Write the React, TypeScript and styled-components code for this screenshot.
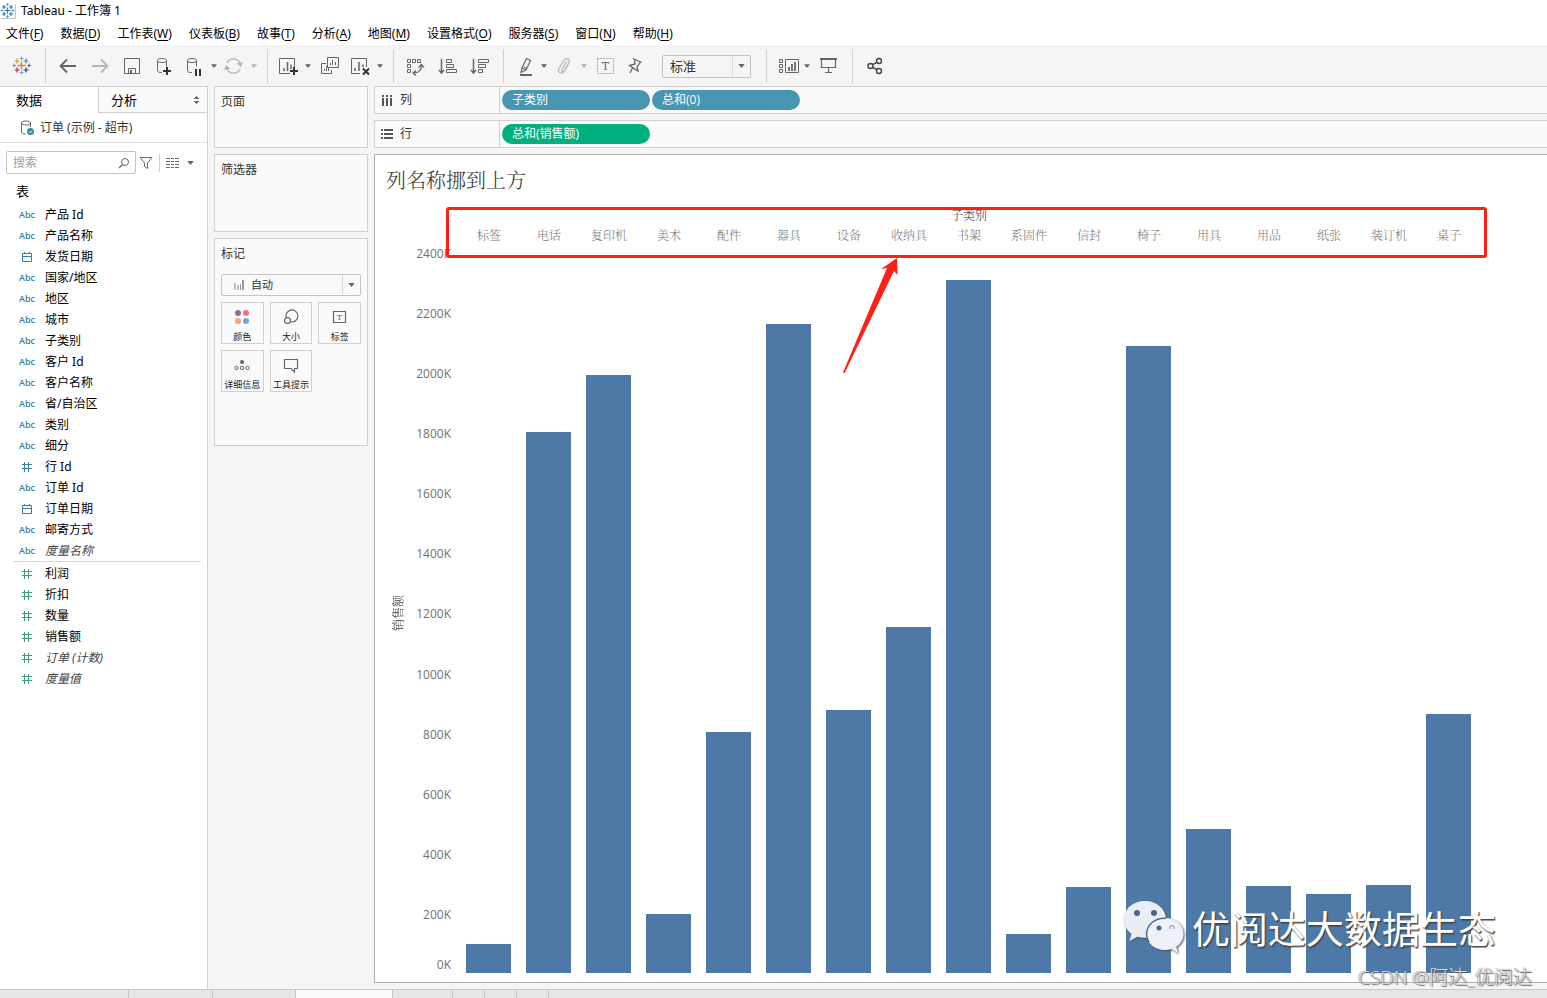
import React from 'react';
import styled, { createGlobalStyle } from 'styled-components';

const ui = `"Open Sans", "Noto Sans CJK SC", sans-serif`;
const chrome = `"Noto Sans", "Noto Sans CJK SC", sans-serif`;
const serif = `"Liberation Serif", "Noto Serif CJK SC", "Noto Sans CJK SC", serif`;

const GlobalStyle = createGlobalStyle`
  * { box-sizing: border-box; }
  body { margin: 0; font-family: ${ui}; font-size: 12px; line-height: 18px; color: #000; background: #f5f5f5; }
  button, input, select { font: inherit; color: inherit; margin: 0; }
  button { background: none; border: 0; padding: 0; }
  ul { list-style: none; margin: 0; padding: 0; }
  h1, h2 { margin: 0; font-weight: 400; }
  svg { display: block; flex: none; }
`;

const Page = styled.div`
  display: flex;
  flex-direction: column;
  height: 100vh;
  min-height: 760px;
  overflow: hidden;
`;

/* ---------- window chrome ---------- */

const TitleBar = styled.header`
  display: flex;
  align-items: center;
  gap: 5px;
  height: 22px;
  background: #fff;
  font-family: ${chrome};
`;

const MenuBar = styled.nav`
  display: flex;
  gap: 17px;
  height: 23px;
  padding: 0 6px;
  background: #fff;
  font-family: ${chrome};
`;

const MenuButton = styled.button`
  line-height: 24px;
  white-space: nowrap;
  u { text-underline-offset: 2px; }
`;

const Toolbar = styled.div`
  display: flex;
  flex: none;
  height: 41px;
  padding-top: 4px;
`;

const ToolGroup = styled.div<{ $first?: boolean; $last?: boolean }>`
  display: flex;
  align-items: center;
  height: 34px;
  padding: ${(p) => (p.$first ? '0 1px 0 0' : '0 7px 0 6px')};
  border-right: ${(p) => (p.$last ? '0' : '1px solid #d0d0d0')};
`;

const ToolButton = styled.button<{ $w?: number; $dim?: boolean }>`
  display: flex;
  align-items: center;
  justify-content: center;
  width: ${(p) => p.$w ?? 32}px;
  height: 34px;
  color: ${(p) => (p.$dim ? '#b5b5b5' : '#666')};
`;

const SelectBox = styled.div<{ $w?: number; $h: number }>`
  position: relative;
  display: flex;
  align-items: center;
  width: ${(p) => (p.$w ? `${p.$w}px` : '100%')};
  height: ${(p) => p.$h}px;
  border: 1px solid #c4c4c4;
  border-radius: 2px;
`;

const NativeSelect = styled.select<{ $pad: number; $size: number }>`
  appearance: none;
  width: 100%;
  height: 100%;
  border: 0;
  background: transparent;
  padding: 0 20px 0 ${(p) => p.$pad}px;
  font-size: ${(p) => p.$size}px;
  color: #333;
`;

const SelectArrow = styled.span`
  position: absolute;
  right: 0;
  top: 0;
  bottom: 0;
  width: 18px;
  display: flex;
  align-items: center;
  justify-content: center;
  border-left: 1px solid #d8d8d8;
  color: #666;
  pointer-events: none;
`;

const SelectIcon = styled.span`
  position: absolute;
  left: 11px;
`;

const ScaleSelect = styled.div`
  padding: 0 8px 0 12px;
`;

/* ---------- work area ---------- */

const Workspace = styled.div`
  display: grid;
  grid-template-columns: 208px 154px minmax(0, 1fr);
  column-gap: 6px;
  flex: 1;
  min-height: 0;
`;

const DataPane = styled.aside`
  background: #fff;
  border-top: 1px solid #d0d0d0;
  border-right: 1px solid #d0d0d0;
`;

const Tabs = styled.div`
  display: flex;
  height: 26px;
`;

const Tab = styled.button<{ $active?: boolean }>`
  display: flex;
  align-items: center;
  justify-content: space-between;
  font-size: 13px;
  width: ${(p) => (p.$active ? '98px' : 'auto')};
  flex: ${(p) => (p.$active ? 'none' : '1')};
  padding: ${(p) => (p.$active ? '0 16px' : '0 7px 0 12px')};
  background: ${(p) => (p.$active ? '#fff' : '#fafafa')};
  border-left: ${(p) => (p.$active ? '0' : '1px solid #d0d0d0')};
  border-bottom: 1px solid ${(p) => (p.$active ? 'transparent' : '#d0d0d0')};
`;

const DataSource = styled.div`
  display: flex;
  align-items: center;
  gap: 5px;
  height: 30px;
  padding-left: 20px;
  border-bottom: 1px solid #e0e0e0;
  color: #333;
  font-family: ${chrome};
`;

const SearchRow = styled.div`
  display: flex;
  align-items: center;
  padding: 8px 6px 0;
  color: #666;
`;

const SearchField = styled.label`
  display: flex;
  align-items: center;
  width: 130px;
  height: 23px;
  padding: 0 5px 0 6px;
  border: 1px solid #c4c4c4;
  border-radius: 2px;
  input {
    flex: 1;
    min-width: 0;
    padding: 0;
    border: 0;
    outline: 0;
    background: none;
  }
  input::placeholder { color: #a0a0a0; opacity: 1; }
`;

const SmallButton = styled.button<{ $w: number; $line?: boolean }>`
  display: flex;
  align-items: center;
  justify-content: center;
  width: ${(p) => p.$w}px;
  height: 18px;
  padding-right: ${(p) => (p.$line ? 3 : 0)}px;
  border-right: ${(p) => (p.$line ? '1px solid #d0d0d0' : '0')};
`;

const TableHeading = styled.h2`
  padding: 8px 16px 4px;
  font-size: 13px;
  line-height: 18px;
`;

const FieldList = styled.ul<{ $measures?: boolean }>`
  color: ${(p) => (p.$measures ? '#3d9e78' : '#3b7f9e')};
  margin: ${(p) => (p.$measures ? '0 6px 0 13px' : '0')};
  padding-top: ${(p) => (p.$measures ? '1px' : '0')};
  border-top: ${(p) => (p.$measures ? '1px solid #d8d8d8' : '0')};
`;

const Field = styled.li<{ $measures?: boolean }>`
  display: flex;
  align-items: center;
  height: 21px;
  padding-left: ${(p) => (p.$measures ? 2 : 15)}px;
`;

const FieldIcon = styled.span`
  display: flex;
  justify-content: center;
  width: 24px;
  margin-right: 6px;
  font: 600 9px/18px "Open Sans", sans-serif;
`;

const FieldName = styled.span<{ $generated?: boolean }>`
  color: ${(p) => (p.$generated ? '#444' : '#000')};
  font-style: ${(p) => (p.$generated ? 'italic' : 'normal')};
  font-family: ${chrome};
`;

const CardColumn = styled.div`
  display: flex;
  flex-direction: column;
  gap: 6px;
`;

const Card = styled.section<{ $h: number }>`
  height: ${(p) => p.$h}px;
  padding: 6px;
  background: #fafafa;
  border: 1px solid #d0d0d0;
  h2 { font-size: 12px; line-height: 18px; color: #333; }
`;

const MarksBody = styled.div`
  display: flex;
  flex-direction: column;
  gap: 6px;
  padding-top: 11px;
`;

const MarksGrid = styled.div`
  display: grid;
  grid-template-columns: repeat(3, 1fr);
  gap: 6px;
`;

const MarkButton = styled.button`
  display: flex;
  flex-direction: column;
  align-items: center;
  gap: 2px;
  height: 42px;
  padding-top: 4px;
  border: 1px solid #d0d0d0;
  color: #666;
  span { font-size: 9px; line-height: 15px; color: #222; white-space: nowrap; }
`;

const Main = styled.main`
  display: flex;
  flex-direction: column;
  gap: 6px;
  min-height: 0;
  padding-bottom: 6px;
`;

const Shelf = styled.div`
  display: flex;
  flex: none;
  height: 28px;
  background: #fafafa;
  border: 1px solid #d0d0d0;
  border-right: 0;
`;

const ShelfLabel = styled.div`
  display: flex;
  align-items: center;
  gap: 7px;
  width: 125px;
  padding-left: 6px;
  border-right: 1px solid #d0d0d0;
  color: #333;
  line-height: 26px;
`;

const Pills = styled.div`
  display: flex;
  align-items: center;
  gap: 2px;
  padding-left: 2px;
`;

const Pill = styled.button<{ $measure?: boolean }>`
  width: 148px;
  height: 20px;
  padding: 0 10px;
  border-radius: 10px;
  text-align: left;
  line-height: 20px;
  color: #fff;
  background: ${(p) => (p.$measure ? '#00b180' : '#4996b2')};
`;

/* ---------- chart ---------- */

const Viz = styled.section`
  display: flex;
  flex-direction: column;
  flex: 1;
  min-height: 0;
  padding: 10px 68px 9px 11px;
  background: #fff;
  border: 1px solid #b0b0b0;
  border-right: 0;
  h1 { font-family: ${serif}; font-weight: 300; font-size: 20px; line-height: 32px; color: #333; }
`;

const ChartHeader = styled.div`
  position: relative;
  margin-left: 73px;
  padding-top: 10px;
  text-align: center;
  font-family: ${serif};
  font-weight: 300;
  color: #333;
`;

const HeaderLabels = styled.div`
  display: flex;
  height: 27px;
  line-height: 22px;
  color: #777;
  span { flex: 1; }
`;

const HighlightFrame = styled.div`
  position: absolute;
  z-index: 2;
  top: 10px;
  left: -13px;
  right: -8px;
  height: 51px;
  border: 3px solid #ff1f14;
  border-radius: 3px;
`;

const HighlightArrow = styled.svg`
  position: absolute;
  z-index: 2;
  left: 37%;
  top: 60px;
`;

const Plot = styled.div`
  display: flex;
  flex: 1;
  min-height: 0;
`;

const AxisTitle = styled.div`
  display: flex;
  align-items: center;
  justify-content: center;
  width: 26px;
  writing-mode: vertical-rl;
  text-orientation: sideways;
  transform: rotate(180deg);
  font-family: ${serif};
  font-weight: 300;
  color: #333;
`;

const Axis = styled.div`
  display: flex;
  flex-direction: column;
  width: 47px;
  margin-top: -6px;
  padding: 0 8px 6px 0;
  text-align: right;
  color: #707070;
  line-height: 16px;
`;

const Tick = styled.div`
  display: flex;
  flex-direction: column;
  justify-content: space-between;
  flex: 1;
  min-height: 0;
`;

const OriginLabel = styled.span`
  margin-bottom: -6px;
`;

const Bars = styled.div`
  display: flex;
  flex: 1;
`;

const BarSlot = styled.div`
  display: flex;
  align-items: flex-end;
  flex: 1;
  padding: 0 8px 0 7px;
`;

const Bar = styled.div`
  width: 100%;
  background: #4e79a7;
`;

/* ---------- footer and watermarks ---------- */

const SheetTabs = styled.footer`
  display: flex;
  flex: none;
  height: 9px;
  background: #e6e6e6;
  border-top: 1px solid #c8c8c8;
`;

const SheetTab = styled.div<{ $w: number; $active?: boolean }>`
  width: ${(p) => p.$w}px;
  border-right: 1px solid #c8c8c8;
  background: ${(p) => (p.$active ? '#fcfcfc' : 'transparent')};
`;

const Watermark = styled.div`
  position: absolute;
  right: 51px;
  bottom: 44px;
  display: flex;
  align-items: center;
  gap: 7px;
  font: 400 38px/50px "Noto Sans CJK SC", sans-serif;
  color: #fff;
  text-shadow: 1px 1px 1px #444, 1px 2px 1px rgba(60, 60, 60, 0.5);
  white-space: nowrap;
`;

const WechatMark = styled.svg`
  filter: drop-shadow(1px 1px 1px #555);
`;

const Credit = styled.div`
  position: absolute;
  right: 15px;
  bottom: 9px;
  font: 300 19px/24px "Open Sans", "Noto Sans CJK SC", sans-serif;
  color: #d8d8d8;
  text-shadow: 1px 1px 1px #555, -1px 0 1px rgba(110, 110, 110, 0.6);
  white-space: nowrap;
`;

/* ---------- icons ---------- */

const Ico = ({ children, size = 24 }: { children: React.ReactNode; size?: number }) => (
  <svg width={size} height={size} viewBox={`0 0 ${size} ${size}`} fill="none" stroke="currentColor" aria-hidden="true">
    {children}
  </svg>
);

const Caret = ({ w = 6 }: { w?: number }) => (
  <svg width={w} height="4" viewBox="0 0 8 5" aria-hidden="true"><path d="M0 0h8L4 5z" fill="currentColor" /></svg>
);

const CaretButton = ({ label, dim }: { label: string; dim?: boolean }) => (
  <ToolButton $w={12} $dim={dim} aria-label={label}><Caret /></ToolButton>
);

const Logo = () => (
  <Ico>
    <path d="M11.5 7.5v8M7.5 11.5h8" stroke="#e8762d" strokeWidth="1.4" />
    <path d="M7 4.5v5M4.5 7h5" stroke="#eb9129" strokeWidth="1.2" />
    <path d="M16 4.5v5M13.5 7h5" stroke="#59879b" strokeWidth="1.2" />
    <path d="M7 13.5v5M4.5 16h5" stroke="#c72037" strokeWidth="1.2" />
    <path d="M16 13.5v5M13.5 16h5" stroke="#1f447e" strokeWidth="1.2" />
    <path d="M11.5 2.5v4M9.5 4.5h4M11.5 16.5v4M9.5 18.5h4" stroke="#6fa3b5" />
    <path d="M4 9.5v4M2.5 11.5h3.5" stroke="#7b8fb0" />
    <path d="M19 9.5v4M17.5 11.5h3.5" stroke="#5b6591" />
  </Ico>
);

const AppIcon = () => (
  <svg width="16" height="18" viewBox="0 0 16 18" fill="none" aria-hidden="true">
    <path d="M1 16.5h14.5V2" stroke="#c4c4c4" />
    <path d="M7.5 5.5v6M4.5 8.500h6M4 3v4M2 5h4M11 3v4M9 5h4M4 10v4M2 12h4M11 10v4M9 12h4" stroke="#2f7fb5" strokeWidth="1.2" />
    <path d="M7.500 1v3M6 2.500h3M7.500 13v3M6 14.500h3M2 7v3M.5 8.500h3M13 7v3M11.500 8.500h3" stroke="#5fa3cc" />
  </svg>
);

const Cylinder = () => (
  <path d="M5.500 6.500v10c0 1.500 1.500 2 4.500 2M5.500 6.500c0-1.300 1.800-2 4.500-2s4.500.7 4.500 2-1.800 2-4.500 2-4.500-.7-4.500-2zM14.500 6.500v6" />
);

const glyphs = {
  abc: 'Abc',
  hash: <Ico size={12}><path d="M3.500 1v10M7.500 1v10M1 3.500h10M1 7.500h10" /></Ico>,
  date: <Ico size={12}><path d="M1.500 2.500h9v8h-9zM1.500 5.500h9M3.500 1v2M8.500 1v2" /></Ico>,
};

const Wechat = () => (
  <WechatMark width="62" height="54" viewBox="0 0 62 54" aria-hidden="true">
    <path d="M22 1C10 1 1 9 1 19.500c0 6 3 11 7.500 14.200L6.500 41l8-4.200c2.500.7 5 1 7.500 1 12 0 21-8 21-18.300S34 1 22 1z" fill="#e9eef6" />
    <path d="M42 18c-10.500 0-18.500 7-18.500 16S31.500 50 42 50c2.300 0 4.500-.4 6.500-1l6.500 4-1.800-6.300C58 43.700 60.500 39 60.500 34c0-9-8-16-18.500-16z" fill="#eef2f8" />
    <path d="M43 18.200C32 17.500 23.500 25 23.500 34c0 3 1 6 2.500 8" fill="none" stroke="#4e6d90" strokeWidth="1.500" />
    <circle cx="14" cy="13" r="3" fill="#44688f" /><circle cx="31" cy="13" r="3" fill="#44688f" />
    <circle cx="36" cy="28" r="2.500" fill="#44688f" />
    <path d="M47 29a2.300 2.300 0 1 1 4 0" fill="none" stroke="#9aa4b0" strokeWidth="1.200" />
  </WechatMark>
);

/* ---------- data ---------- */

const menus: [string, string][] = [
  ['文件', 'F'], ['数据', 'D'], ['工作表', 'W'], ['仪表板', 'B'], ['故事', 'T'], ['分析', 'A'],
  ['地图', 'M'], ['设置格式', 'O'], ['服务器', 'S'], ['窗口', 'N'], ['帮助', 'H'],
];

const dimensions: [keyof typeof glyphs, string][] = [
  ['abc', '产品 Id'], ['abc', '产品名称'], ['date', '发货日期'], ['abc', '国家/地区'], ['abc', '地区'],
  ['abc', '城市'], ['abc', '子类别'], ['abc', '客户 Id'], ['abc', '客户名称'], ['abc', '省/自治区'],
  ['abc', '类别'], ['abc', '细分'], ['hash', '行 Id'], ['abc', '订单 Id'], ['date', '订单日期'],
  ['abc', '邮寄方式'], ['abc', '度量名称'],
];
const measures = ['利润', '折扣', '数量', '销售额', '订单 (计数)', '度量值'];
const generated = ['度量名称', '订单 (计数)', '度量值'];

const axisMax = 2400;
const sales: [string, number][] = [
  ['标签', 97], ['电话', 1801], ['复印机', 1991], ['美术', 196], ['配件', 802], ['器具', 2160],
  ['设备', 875], ['收纳具', 1152], ['书架', 2307], ['系固件', 130], ['信封', 286], ['椅子', 2087],
  ['用具', 479], ['用品', 290], ['纸张', 263], ['装订机', 293], ['桌子', 862],
];
const ticks = Array.from({ length: 12 }, (_, i) => axisMax - i * 200);
const sheetTabs = [129, 84, 83, 97, 60, 32, 32, 32];

export default function App() {
  return (
    <Page>
      <GlobalStyle />
      <TitleBar><AppIcon />Tableau - 工作簿 1</TitleBar>
      <MenuBar>
        {menus.map(([name, key]) => <MenuButton key={key}>{name}(<u>{key}</u>)</MenuButton>)}
      </MenuBar>

      <Toolbar>
        <ToolGroup $first>
          <ToolButton $w={44} aria-label="起始页"><Logo /></ToolButton>
        </ToolGroup>
        <ToolGroup>
          <ToolButton aria-label="撤消"><Ico><path d="M4.500 12H20M11 5.500 4.500 12l6.500 6.500" strokeWidth="1.800" /></Ico></ToolButton>
          <ToolButton $dim aria-label="重做"><Ico><path d="M4 12h15.500M13 5.500l6.500 6.500-6.500 6.500" strokeWidth="1.800" /></Ico></ToolButton>
          <ToolButton aria-label="保存">
            <Ico><path d="M4.500 4.500h15v15h-15z" /><path d="M8.500 19v-4.500h7V19" /><path d="M11 16v3" strokeWidth="2" /></Ico>
          </ToolButton>
          <ToolButton aria-label="新建数据源">
            <Ico><Cylinder /><path d="M15 13v8M11 17h8" stroke="#333" strokeWidth="2" /></Ico>
          </ToolButton>
          <ToolButton $w={28} aria-label="暂停自动更新">
            <Ico><Cylinder /><path d="M14 15v7M18 15v7" stroke="#333" strokeWidth="2" /></Ico>
          </ToolButton>
          <CaretButton label="自动更新选项" />
          <ToolButton $w={28} $dim aria-label="运行更新">
            <Ico>
              <path d="M4.800 9A7.300 7.300 0 0 1 18 9M18.200 15A7.300 7.300 0 0 1 5 15" strokeWidth="1.300" />
              <path d="M14.500 9.500l6.500-1.500-2 5zM8.500 14.500L2 16l2-5z" fill="currentColor" stroke="none" />
            </Ico>
          </ToolButton>
          <CaretButton label="更新选项" dim />
        </ToolGroup>
        <ToolGroup>
          <ToolButton $w={28} aria-label="新建工作表">
            <Ico>
              <path d="M14 19.500H3.500v-15h15V14" /><path d="M8 14v3M11.500 8v9M15 10.500V15" strokeWidth="1.500" />
              <path d="M18 13v8M14 17h8" stroke="#333" strokeWidth="2" />
            </Ico>
          </ToolButton>
          <CaretButton label="新建选项" />
          <ToolButton aria-label="复制">
            <Ico>
              <path d="M9.500 3.500h11v10h-11z" /><path d="M12.500 9v2M14.500 6v5M17.500 8v3" />
              <path d="M8 9.500H3.500v10h10V16M6.500 15v2M8.500 12v5M10.500 14v3" />
            </Ico>
          </ToolButton>
          <ToolButton $w={28} aria-label="清除工作表">
            <Ico>
              <path d="M12 19.500H3.500v-15h15V13" /><path d="M7 14v3M11 8v9M15 10.500V13" strokeWidth="1.500" />
              <path d="m15 14.500 6 6M21 14.500l-6 6" stroke="#333" strokeWidth="2" />
            </Ico>
          </ToolButton>
          <CaretButton label="清除选项" />
        </ToolGroup>
        <ToolGroup>
          <ToolButton aria-label="交换行和列">
            <Ico>
              <path d="M3.500 5.500h3v3h-3zM8.500 5.500h3v3h-3zM13.500 5.500h3v3h-3zM3.500 10.500h3v3h-3zM3.500 15.500h3v3h-3z" />
              <path d="M17.500 11c0 5-2.500 8-8 8M14.500 13.500l3-3 2.500 3M12 16.500 9 19l3 2.500" strokeWidth="1.300" />
            </Ico>
          </ToolButton>
          <ToolButton aria-label="升序排序">
            <Ico><path d="M5.500 5v14M3 16l2.500 3L8 16" strokeWidth="1.500" /><path d="M10.500 5.500h5v3h-5zM10.500 10.500h7v3h-7zM10.500 15.500h10v3h-10z" /></Ico>
          </ToolButton>
          <ToolButton aria-label="降序排序">
            <Ico><path d="M5.500 5v14M3 16l2.500 3L8 16" strokeWidth="1.500" /><path d="M10.500 5.500h10v3h-10zM10.500 10.500h7v3h-7zM10.500 15.500h4v3h-4z" /></Ico>
          </ToolButton>
        </ToolGroup>
        <ToolGroup>
          <ToolButton $w={28} aria-label="突出显示">
            <Ico><path d="M10 14 14.500 4.500l4 2L14 16zM10 14l-1 4.500 5-2.500M12 13l3 1.500" strokeWidth="1.200" /><path d="M8 21h12" strokeWidth="2" /></Ico>
          </ToolButton>
          <CaretButton label="突出显示选项" />
          <ToolButton $w={28} $dim aria-label="组成员">
            <Ico><path d="m14.500 7.500-4.500 8c-1 2 1.200 3 2.200 1.300L17 8.500c1.800-3.500-2.800-5.500-4.800-2.300L7 14.500c-2 4 2.800 6.500 5.200 2.700l4.300-7" strokeWidth="1.200" /></Ico>
          </ToolButton>
          <CaretButton label="组选项" dim />
          <ToolButton aria-label="显示标记标签">
            <Ico>
              <path d="M3.500 4.500h16v15h-16z" strokeDasharray="2 1" stroke="#a5a5a5" />
              <text x="11.500" y="16" textAnchor="middle" fill="currentColor" stroke="none" fontFamily="DejaVu Serif, serif" fontSize="11">T</text>
            </Ico>
          </ToolButton>
          <ToolButton $w={28} aria-label="固定坐标轴">
            <Ico><path d="M9 4.500 17.500 8.500M10.500 5l.5 5-5.500 1.500 8.500 5.500-1-4 3.500-5M8.500 14 6 19" strokeWidth="1.300" /></Ico>
          </ToolButton>
          <ScaleSelect>
            <SelectBox $w={89} $h={23}>
              <NativeSelect $pad={7} $size={13} aria-label="适合"><option>标准</option></NativeSelect>
              <SelectArrow><Caret w={7} /></SelectArrow>
            </SelectBox>
          </ScaleSelect>
        </ToolGroup>
        <ToolGroup>
          <ToolButton $w={28} aria-label="显示/隐藏卡">
            <Ico>
              <path d="M4.500 5.500h3v3h-3zM4.500 10.500h3v3h-3zM4.500 15.500h3v3h-3zM10.500 5.500h13v13h-13z" />
              <path d="M14 13v4M17 10v7M20 8v9" strokeWidth="1.800" />
            </Ico>
          </ToolButton>
          <CaretButton label="卡选项" />
          <ToolButton aria-label="演示模式">
            <Ico><path d="M3 5h17" strokeWidth="2" /><path d="M4.500 6v7.500h14V6M11.500 13.500v5M8 18.500h7" strokeWidth="1.200" /></Ico>
          </ToolButton>
        </ToolGroup>
        <ToolGroup $last>
          <ToolButton aria-label="共享">
            <Ico><g stroke="#444" strokeWidth="1.400"><circle cx="7.500" cy="12" r="2.500" /><circle cx="16" cy="7" r="2.500" /><circle cx="16" cy="17" r="2.500" /><path d="m9.700 10.700 4-2.400M9.700 13.300l4 2.400" /></g></Ico>
          </ToolButton>
        </ToolGroup>
      </Toolbar>

      <Workspace>
        <DataPane>
          <Tabs role="tablist">
            <Tab role="tab" aria-selected="true" $active>数据</Tab>
            <Tab role="tab" aria-selected="false">
              分析
              <svg width="7" height="8" viewBox="0 0 7 8" aria-hidden="true"><path d="M3.500 0 6.500 3h-6zM3.500 8 6.500 5h-6z" fill="#666" /></svg>
            </Tab>
          </Tabs>
          <DataSource>
            <svg width="15" height="16" viewBox="0 0 15 16" fill="none" aria-hidden="true">
              <path d="M1.500 3v9c0 1.300 1.500 2 4 2M1.500 3c0-1.200 1.800-2 4.500-2s4.500.8 4.500 2-1.800 2-4.500 2-4.500-.8-4.500-2zM10.500 3v4" stroke="#666" />
              <circle cx="10.500" cy="11.500" r="3.500" fill="#3b87a5" /><path d="m9 11.500 1.200 1.200 2-2.200" stroke="#fff" />
            </svg>
            订单 (示例 - 超市)
          </DataSource>
          <SearchRow>
            <SearchField>
              <input type="text" placeholder="搜索" aria-label="搜索" />
              <Ico size={12}><circle cx="7" cy="5" r="3.500" /><path d="M4.500 7.500 1 11" strokeWidth="1.300" /></Ico>
            </SearchField>
            <SmallButton $w={24} $line aria-label="筛选字段">
              <svg width="14" height="14" viewBox="0 0 14 14" fill="none" stroke="currentColor" aria-hidden="true"><path d="M1 1.500h12L8.500 7v5.500l-3-2V7z" /></svg>
            </SmallButton>
            <SmallButton $w={24} aria-label="视图">
              <svg width="13" height="10" viewBox="0 0 13 10" fill="none" stroke="currentColor" aria-hidden="true"><path d="M0 .5h13M0 3.500h13M0 6.500h13M0 9.500h13" strokeDasharray="4 1 3 1 4 0" /></svg>
            </SmallButton>
            <SmallButton $w={12} aria-label="视图选项"><Caret w={7} /></SmallButton>
          </SearchRow>
          <TableHeading>表</TableHeading>
          <FieldList>
            {dimensions.map(([kind, name]) => (
              <Field key={name}>
                <FieldIcon>{glyphs[kind]}</FieldIcon>
                <FieldName $generated={generated.includes(name)}>{name}</FieldName>
              </Field>
            ))}
          </FieldList>
          <FieldList $measures>
            {measures.map((name) => (
              <Field key={name} $measures>
                <FieldIcon>{glyphs.hash}</FieldIcon>
                <FieldName $generated={generated.includes(name)}>{name}</FieldName>
              </Field>
            ))}
          </FieldList>
        </DataPane>

        <CardColumn>
          <Card $h={62}><h2>页面</h2></Card>
          <Card $h={78}><h2>筛选器</h2></Card>
          <Card $h={208}>
            <h2>标记</h2>
            <MarksBody>
              <SelectBox $h={22}>
                <SelectIcon>
                  <svg width="12" height="12" viewBox="0 0 12 12" fill="none" aria-hidden="true">
                    <path d="M1.500 4.500h1v6h-1zM4.500 6.500h1v4h-1z" stroke="#bbb" /><path d="M7.500 5v6" stroke="#999" /><path d="M10 1v10" stroke="#999" strokeWidth="2" />
                  </svg>
                </SelectIcon>
                <NativeSelect $pad={29} $size={11} aria-label="标记类型"><option>自动</option></NativeSelect>
                <SelectArrow><Caret w={7} /></SelectArrow>
              </SelectBox>
              <MarksGrid>
                <MarkButton>
                  <Ico size={20}><g stroke="none"><circle cx="6" cy="6" r="3" fill="#86709c" /><circle cx="14" cy="6" r="3" fill="#f8717f" /><circle cx="6" cy="14" r="3" fill="#f5a673" /><circle cx="14" cy="14" r="3" fill="#7fa5cd" /></g></Ico>
                  <span>颜色</span>
                </MarkButton>
                <MarkButton>
                  <Ico size={20}><path d="M5.500 11.500A6 6 0 1 1 9.500 14.800" strokeWidth="1.200" /><circle cx="6.500" cy="13.500" r="3" strokeWidth="1.200" /></Ico>
                  <span>大小</span>
                </MarkButton>
                <MarkButton>
                  <Ico size={20}><path d="M3.500 4.500h12v11h-12z" strokeWidth="1.200" /><text x="9.500" y="13" textAnchor="middle" fill="currentColor" stroke="none" fontFamily="DejaVu Serif, serif" fontSize="8">T</text></Ico>
                  <span>标签</span>
                </MarkButton>
                <MarkButton>
                  <Ico size={20}><circle cx="10" cy="7" r="2" fill="currentColor" stroke="none" /><circle cx="4.500" cy="13" r="1.700" /><circle cx="10" cy="13" r="1.700" /><circle cx="15.500" cy="13" r="1.700" /></Ico>
                  <span>详细信息</span>
                </MarkButton>
                <MarkButton>
                  <Ico size={20}><path d="M3.500 4.500h13v9h-3v3.500l-3.500-3.500H3.500z" strokeWidth="1.200" /></Ico>
                  <span>工具提示</span>
                </MarkButton>
              </MarksGrid>
            </MarksBody>
          </Card>
        </CardColumn>

        <Main>
          <Shelf>
            <ShelfLabel>
              <Ico size={12}><path d="M2 1v2M6 1v2M10 1v2M2 4v8M6 4v8M10 4v8" stroke="#555" strokeWidth="2" /></Ico>列
            </ShelfLabel>
            <Pills><Pill>子类别</Pill><Pill>总和(0)</Pill></Pills>
          </Shelf>
          <Shelf>
            <ShelfLabel>
              <Ico size={12}><path d="M0 2h2M0 6h2M0 10h2M3 2h9M3 6h9M3 10h9" stroke="#555" strokeWidth="2" /></Ico>行
            </ShelfLabel>
            <Pills><Pill $measure>总和(销售额)</Pill></Pills>
          </Shelf>
          <Viz>
            <h1>列名称挪到上方</h1>
            <ChartHeader>
              <div>子类别</div>
              <HeaderLabels>{sales.map(([name]) => <span key={name}>{name}</span>)}</HeaderLabels>
              <HighlightFrame />
              <HighlightArrow width="64" height="118" viewBox="0 0 64 118" aria-hidden="true">
                <path d="M61 1 45 12l6-1L7 115.500l1.500.8L58 14l3.500 4z" fill="#ff1f14" />
              </HighlightArrow>
            </ChartHeader>
            <Plot>
              <AxisTitle>销售额</AxisTitle>
              <Axis>
                {ticks.map((t) => (
                  <Tick key={t}><span>{t}K</span>{t === 200 && <OriginLabel>0K</OriginLabel>}</Tick>
                ))}
              </Axis>
              <Bars>
                {sales.map(([name, value]) => (
                  <BarSlot key={name}><Bar style={{ height: `${(value / axisMax) * 100}%` }} /></BarSlot>
                ))}
              </Bars>
            </Plot>
          </Viz>
        </Main>
      </Workspace>

      <SheetTabs>
        {sheetTabs.map((w, i) => <SheetTab key={i} $w={w} $active={i === 3} />)}
      </SheetTabs>
      <Watermark><Wechat />优阅达大数据生态</Watermark>
      <Credit>CSDN @阿达_优阅达</Credit>
    </Page>
  );
}
